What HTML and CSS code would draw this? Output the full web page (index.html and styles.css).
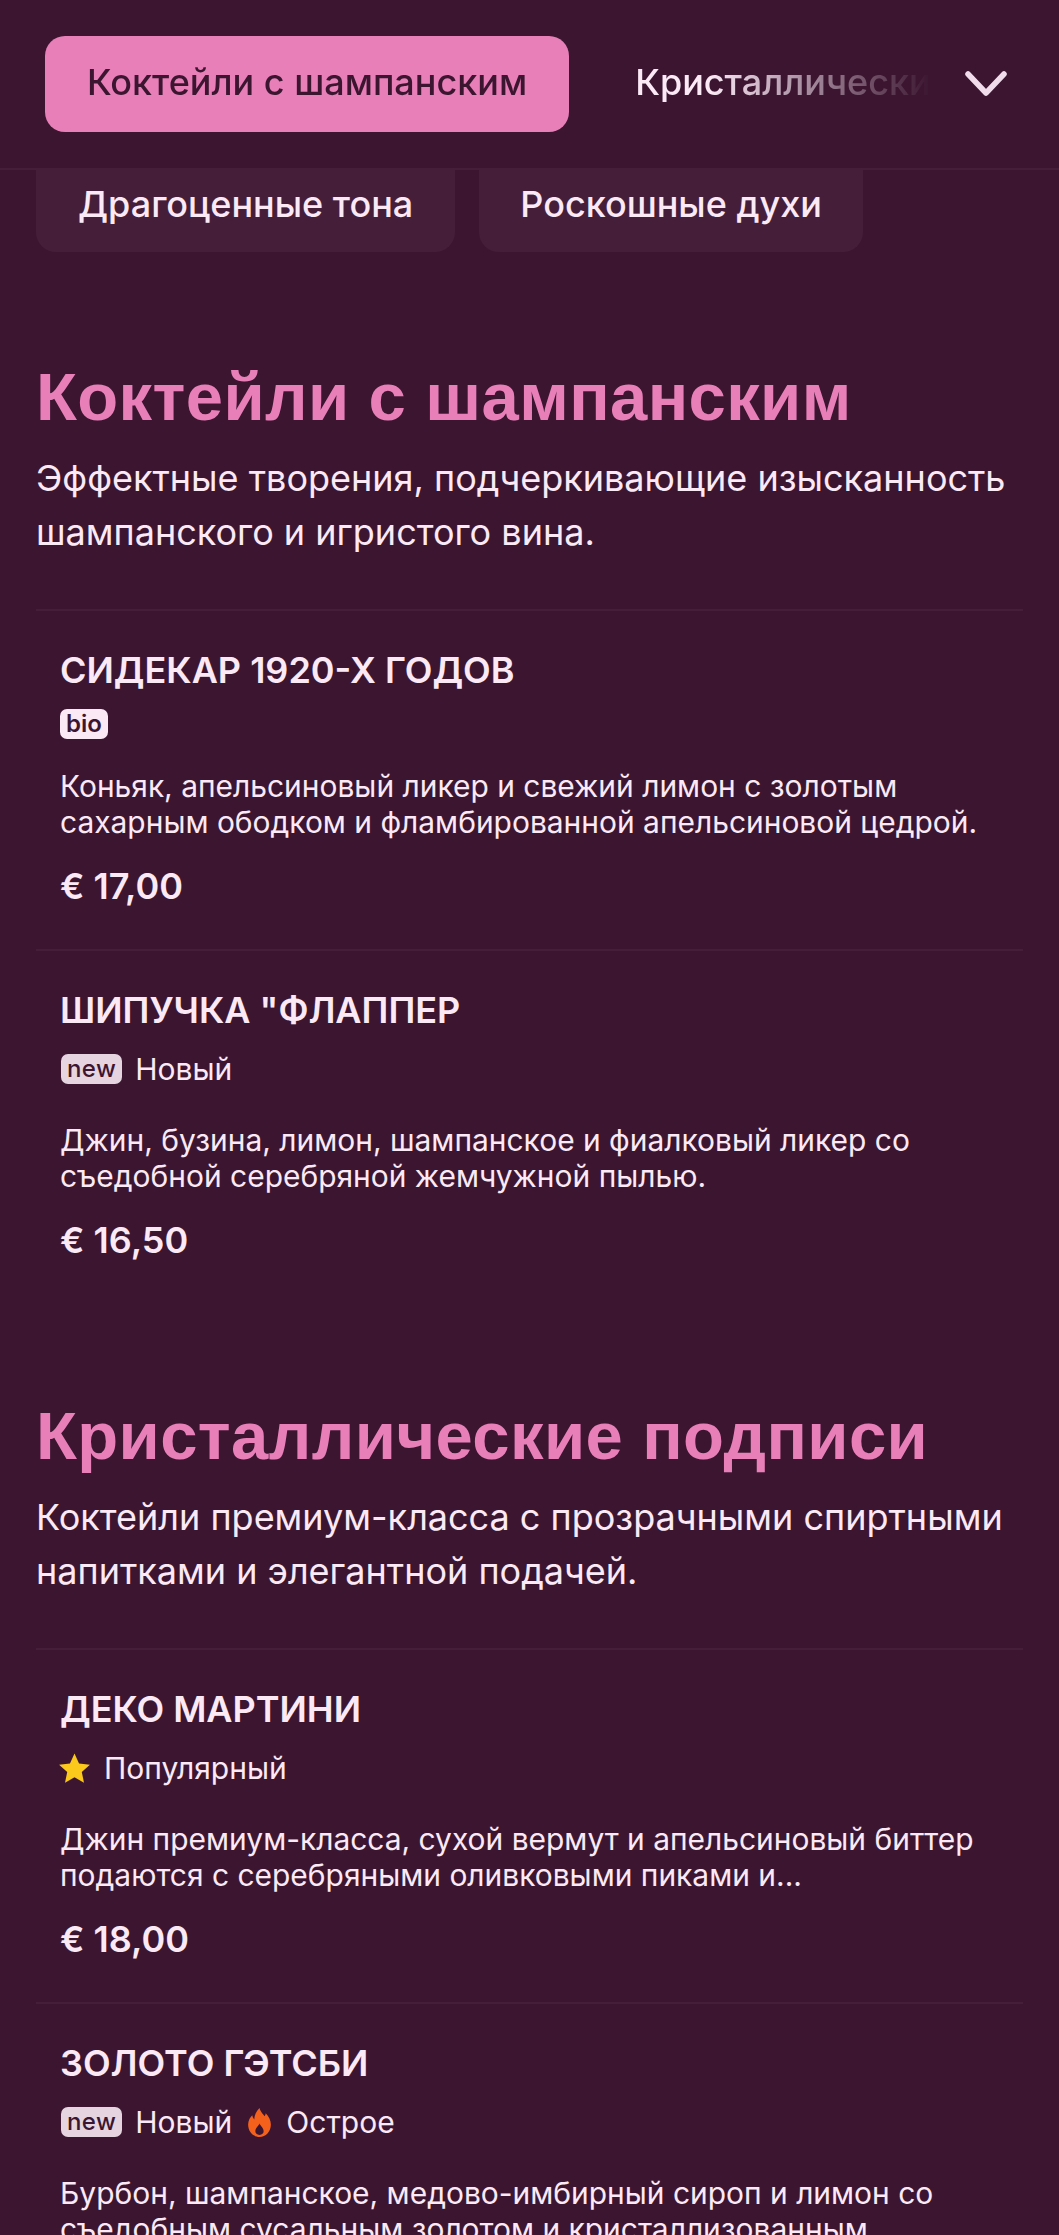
FILE: index.html
```html
<!DOCTYPE html>
<html lang="ru">
<head>
<meta charset="utf-8">
<title>Меню</title>
<link rel="stylesheet" href="styles.css">
</head>
<body>
<header class="topbar">
  <nav class="tabs">
    <a class="tab active">Коктейли с шампанским</a>
    <a class="tab">Кристаллические подписи</a>
  </nav>
  <svg class="chev" viewBox="0 0 44 28" width="44" height="28"><path d="M4 4 L22 23 L40 4" fill="none" stroke="#f0dcea" stroke-width="5.500" stroke-linecap="round" stroke-linejoin="round"/></svg>
</header>
<div class="chips">
  <a class="chip">Драгоценные тона</a>
  <a class="chip">Роскошные духи</a>
</div>
<main>
  <section class="section">
    <h2>Коктейли с шампанским</h2>
    <p class="lead">Эффектные творения, подчеркивающие изысканность шампанского и игристого вина.</p>
    <article class="item">
      <h3>СИДЕКАР 1920-Х ГОДОВ</h3>
      <div class="tags tight"><span class="badge">bio</span></div>
      <p class="desc">Коньяк, апельсиновый ликер и свежий лимон с золотым сахарным ободком и фламбированной апельсиновой цедрой.</p>
      <div class="price">€ 17,00</div>
    </article>
    <article class="item">
      <h3>ШИПУЧКА "ФЛАППЕР</h3>
      <div class="tags"><span class="badge dim">new</span><span>Новый</span></div>
      <p class="desc">Джин, бузина, лимон, шампанское и фиалковый ликер со съедобной серебряной жемчужной пылью.</p>
      <div class="price">€ 16,50</div>
    </article>
  </section>
  <section class="section">
    <h2>Кристаллические подписи</h2>
    <p class="lead">Коктейли премиум-класса с прозрачными спиртными напитками и элегантной подачей.</p>
    <article class="item">
      <h3>ДЕКО МАРТИНИ</h3>
      <div class="tags"><svg class="ico star" viewBox="0 0 24 24" width="33" height="33"><path d="M12 1l3.300 7.300 7.900.9-5.900 5.300 1.600 7.800L12 18.400l-6.900 3.900 1.600-7.800-5.900-5.300 7.900-.9z" fill="#fbc91c"/></svg><span>Популярный</span></div>
      <p class="desc">Джин премиум-класса, сухой вермут и апельсиновый биттер подаются с серебряными оливковыми пиками и...</p>
      <div class="price">€ 18,00</div>
    </article>
    <article class="item">
      <h3>ЗОЛОТО ГЭТСБИ</h3>
      <div class="tags"><span class="badge dim">new</span><span>Новый</span><svg class="ico fire" viewBox="0 0 24 30" width="25" height="31"><path fill-rule="evenodd" d="M12 1c1 4 3 5 5 8 .6-1 1-2 1-3 3 3 5 7 5 11 0 7-5 12-11 12S1 24 1 17c0-4 2-7 4-9 .3 2 1 3 2 4 0-4 2-8 5-11zm0 15c-1 2.500-4 4-4 7.500 0 2 1.500 3.500 4 3.500s4-1.500 4-3.500c0-3.500-3-5-4-7.500z" fill="#f4611c"/></svg><span>Острое</span></div>
      <p class="desc">Бурбон, шампанское, медово-имбирный сироп и лимон со съедобным сусальным золотом и кристаллизованным имбирем.</p>
      <div class="price">€ 19,00</div>
    </article>
  </section>
</main>
</body>
</html>
```
FILE: styles.css
```css
* { box-sizing: border-box; margin: 0; padding: 0; }
html, body { height: 2235px; overflow: hidden; }
body { background: #3c1631; color: #fbe9f6; font-family: Inter, "Noto Sans", sans-serif; }
.topbar { height: 170px; display: flex; align-items: center; padding: 0 45px; border-bottom: 2px solid #451f3a; position: relative; }
.tabs { display: flex; align-items: center; gap: 24px; width: 886px; overflow: hidden; flex: none;
  -webkit-mask-image: linear-gradient(to right, #000 75%, transparent 100%); mask-image: linear-gradient(to right, #000 75%, transparent 100%); }
.tab { flex: none; font-size: 36px; font-weight: 500; padding: 0 42px; height: 96px; line-height: 92px; border-radius: 20px; white-space: nowrap; }
.tab.active { background: #e87fb8; color: #3c1631; }
.chev { margin-left: 33px; flex: none; margin-top: 0; }
.chips { height: 84px; display: flex; gap: 24px; padding: 0 36px; align-items: flex-end; overflow: hidden; margin-top: -2px; }
.chip { flex: none; height: 112px; padding: 33px 42px 0; background: #451f3a; border-radius: 20px; font-size: 36px; font-weight: 500; line-height: 62px; white-space: nowrap; }
.chip + .chip { padding: 33px 41px 0; }
.section { padding: 0 36px; }
.section + .section { margin-top: 93px; }
h2 { font-family: "Liberation Sans", Arial, sans-serif; font-size: 67px; font-weight: 700; letter-spacing: .4px; color: #e87fb8; line-height: 80px; padding-top: 105px; box-sizing: content-box; }
.section + .section h2 { padding-top: 0; }
.lead { font-size: 36px; line-height: 54px; margin-top: 14px; margin-bottom: 50px; }
.item { border-top: 2px solid #451f3a; padding: 37px 24px 41px; }
h3 { font-size: 36px; font-weight: 600; line-height: 44px; }
.tags { display: flex; align-items: center; gap: 14px; font-size: 30px; line-height: 36px; margin-top: 19px; margin-bottom: 35px; }
.tags.tight { margin-top: 17px; margin-bottom: 29px; }
.badge { display: inline-block; background: #fbe9f6; color: #3c1631; font-size: 24px; font-weight: 600; line-height: 30px; padding: 0 6px; border-radius: 7px; }
.badge.dim { background: #e6d5e0; font-weight: 500; letter-spacing: .4px; margin-left: 1px; margin-right: -1px; }
.desc { font-size: 29.950px; line-height: 36px; }
.price { font-size: 36px; font-weight: 600; line-height: 44px; margin-top: 24px; }
.star { margin-left: -2px; margin-right: -1px; }
.fire { margin-left: 1px; }
```
